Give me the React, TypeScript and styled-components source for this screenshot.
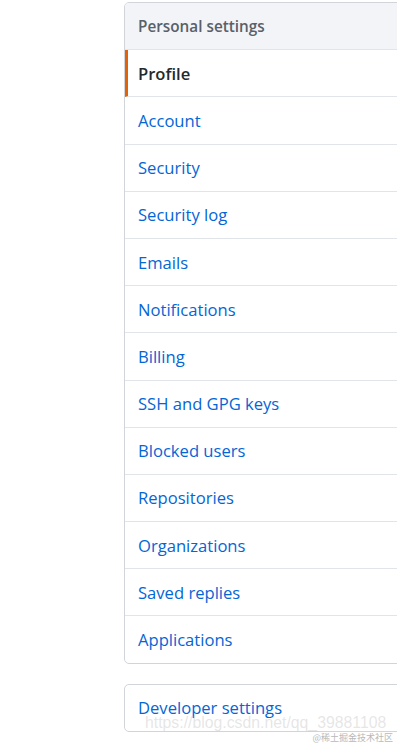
import React from 'react';
import styled, { createGlobalStyle } from 'styled-components';

const GlobalStyle = createGlobalStyle`
  body {
    margin: 0;
    background: #fff;
    overflow: hidden;
    font-family: "Open Sans", "Noto Sans", sans-serif;
  }
`;

const Page = styled.div`
  position: relative;
  width: 397px;
  height: 744px;
  padding: 2px 0 0 124px;
  box-sizing: border-box;
  display: flex;
  flex-direction: column;
  gap: 20px;
  overflow: hidden;
`;

const Menu = styled.nav`
  width: 320px;
  border: 1px solid #d1d5da;
  border-radius: 5px;
  overflow: hidden;
  background: #fff;
  flex-shrink: 0;
`;

const Heading = styled.div`
  height: 46.2px;
  display: flex;
  align-items: center;
  padding-left: 13px;
  background: #f3f4f7;
  color: #586069;
  font-size: 15.3px;
  font-weight: 600;
  border-bottom: 1px solid #e1e4e8;
`;

const Item = styled.a<{ $selected?: boolean; $last?: boolean }>`
  height: 46.2px;
  display: flex;
  align-items: center;
  padding-left: ${(p) => (p.$selected ? '10px' : '13px')};
  border-left: ${(p) => (p.$selected ? '3px solid #e36209' : 'none')};
  border-bottom: ${(p) => (p.$last ? 'none' : '1px solid #e1e4e8')};
  color: ${(p) => (p.$selected ? '#24292e' : '#0366d6')};
  font-weight: ${(p) => (p.$selected ? 600 : 400)};
  font-size: 16.6px;
  text-decoration: none;
`;

const Watermark = styled.div`
  position: absolute;
  left: 145px;
  top: 714px;
  font-family: "Liberation Sans", Arial, sans-serif;
  font-size: 15.8px;
  color: rgba(200, 200, 200, 0.45);
  white-space: nowrap;
`;

const Stamp = styled.div`
  position: absolute;
  right: 4px;
  top: 731px;
  font-family: "Noto Sans CJK SC", sans-serif;
  font-size: 9px;
  color: #b8b8b8;
`;

const items = [
  'Account',
  'Security',
  'Security log',
  'Emails',
  'Notifications',
  'Billing',
  'SSH and GPG keys',
  'Blocked users',
  'Repositories',
  'Organizations',
  'Saved replies',
  'Applications',
];

export default function App() {
  return (
    <>
      <GlobalStyle />
      <Page>
        <Menu>
          <Heading>Personal settings</Heading>
          <Item $selected>Profile</Item>
          {items.map((label, i) => (
            <Item key={label} href="#" $last={i === items.length - 1}>
              {label}
            </Item>
          ))}
        </Menu>
        <Menu>
          <Item href="#" $last>Developer settings</Item>
        </Menu>
        <Watermark>https://blog.csdn.net/qq_39881108</Watermark>
        <Stamp>@稀土掘金技术社区</Stamp>
      </Page>
    </>
  );
}
